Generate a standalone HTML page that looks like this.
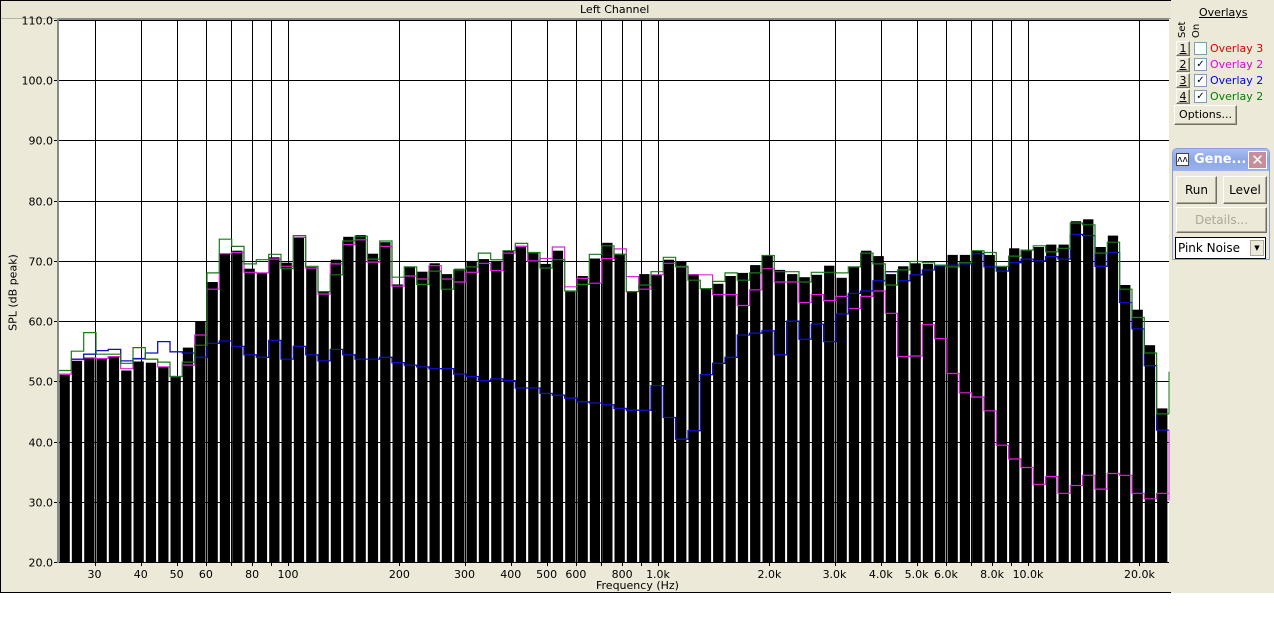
<!DOCTYPE html>
<html><head><meta charset="utf-8"><style>
body{margin:0;width:1274px;height:637px;background:#fff;overflow:hidden;font-family:Tahoma,"DejaVu Sans","Liberation Sans",sans-serif;}
#chart{position:absolute;left:0;top:0;width:1170px;height:591px;border:1px solid #000;border-right:none;background:#ece9d8;}
#side{position:absolute;left:1171px;top:0;width:103px;height:593px;background:#ece9d8;}
.t{position:absolute;font-size:11px;color:#000;white-space:nowrap;font-family:"DejaVu Sans","Liberation Sans",sans-serif;}
.btn{position:absolute;background:#ece9d8;border:1px solid;border-color:#fff #716f64 #716f64 #fff;box-shadow:inset -1px -1px 0 #aca899;font-size:11px;text-align:center;box-sizing:border-box;font-family:"DejaVu Sans","Liberation Sans",sans-serif;}
.cb{position:absolute;width:11px;height:11px;border:1px solid #7f9db9;background:#fff;font-size:10px;line-height:11px;text-align:center;font-weight:bold;}
</style></head><body>
<div id="chart">
<div style="position:absolute;left:0;top:0;width:1170px;height:17px;border-bottom:1px solid #b5b2a4;background:#e9e6d6"></div>
<div class="t" style="left:579px;top:2px">Left Channel</div>
<div class="t" style="left:595px;top:578px">Frequency (Hz)</div>
<div class="t" style="left:-43px;top:285px;transform:rotate(-90deg);width:110px;text-align:center">SPL (dB peak)</div>
<svg id="svg" width="1171" height="591" style="position:absolute;left:-1px;top:-1px" font-family="DejaVu Sans, Liberation Sans, sans-serif" font-size="11"></svg>
</div>
<div id="side">
<div class="t" style="left:28px;top:6px;text-decoration:underline">Overlays</div>
<div class="t" style="left:6px;top:38px;transform:rotate(-90deg);transform-origin:left top;font-size:10px">Set</div>
<div class="t" style="left:20px;top:38px;transform:rotate(-90deg);transform-origin:left top;font-size:10px">On</div>
<div class="btn" style="left:5px;top:41px;width:14px;height:15px;line-height:13px;text-decoration:underline">1</div>
<div class="btn" style="left:5px;top:57px;width:14px;height:15px;line-height:13px;text-decoration:underline">2</div>
<div class="btn" style="left:5px;top:73px;width:14px;height:15px;line-height:13px;text-decoration:underline">3</div>
<div class="btn" style="left:5px;top:89px;width:14px;height:15px;line-height:13px;text-decoration:underline">4</div>
<div class="cb" style="left:23px;top:42px"></div>
<div class="cb" style="left:23px;top:58px">✓</div>
<div class="cb" style="left:23px;top:74px">✓</div>
<div class="cb" style="left:23px;top:90px">✓</div>
<div class="t" style="left:39px;top:42px;color:#e00000">Overlay 3</div>
<div class="t" style="left:39px;top:58px;color:#e000e0">Overlay 2</div>
<div class="t" style="left:39px;top:74px;color:#0000e0">Overlay 2</div>
<div class="t" style="left:39px;top:90px;color:#008000">Overlay 2</div>
<div class="btn" style="left:3px;top:105px;width:63px;height:20px;line-height:18px">Options...</div>
<div style="position:absolute;left:1px;top:148px;width:98px;height:112px;background:#ece9d8;border:1px solid #8a9fd8;border-radius:5px 5px 0 0;box-sizing:border-box">
<div style="position:absolute;left:0;top:0;width:96px;height:22px;background:linear-gradient(#a8bdf2,#8aa6e6 50%,#9cb2ee);border-radius:4px 4px 0 0"></div>
<div style="position:absolute;left:3px;top:4px;width:13px;height:13px;background:#fff;border:1px solid #444;font-size:9px;line-height:12px;text-align:center;box-sizing:border-box">ʌʌ</div>
<div style="position:absolute;left:21px;top:3px;color:#fff;font-weight:bold;font-size:13px;font-family:'DejaVu Sans',sans-serif">Gene...</div>
<div style="position:absolute;left:75px;top:2px;width:19px;height:18px;background:#c88d99;border:1px solid #fff;box-sizing:border-box;color:#fff;font-size:15px;line-height:16px;text-align:center">✕</div>
<div class="btn" style="left:3px;top:27px;width:41px;height:28px;line-height:26px;font-size:12px">Run</div>
<div class="btn" style="left:50px;top:27px;width:44px;height:28px;line-height:26px;font-size:12px">Level</div>
<div class="btn" style="left:3px;top:58px;width:91px;height:26px;line-height:24px;font-size:12px;color:#aca899">Details...</div>
<div style="position:absolute;left:2px;top:88px;width:91px;height:22px;background:#fff;border:1px solid #000;box-sizing:border-box;font-size:12px;line-height:20px;padding-left:2px;font-family:'DejaVu Sans',sans-serif">Pink Noise<div style="position:absolute;right:1px;top:2px;width:14px;height:16px;background:#ece9d8;border:1px solid #aca899;box-sizing:border-box;font-size:7px;line-height:15px;text-align:center">▼</div></div>
</div>
</div>
<script>
var S=document.getElementById('svg'),h='';
function Y(d){return 562-(d-20)*6.022;}
function X(f){return 288+370*Math.log10(f/100);}
var fr=[30,40,50,60,70,80,90,100,200,300,400,500,600,700,800,900,1000,2000,3000,4000,5000,6000,7000,8000,9000,10000,20000];
h+='<rect x="59" y="20" width="1110" height="542" fill="#fff"/>';
fr.forEach(function(f){var x=Math.round(X(f))+0.5;h+='<line x1="'+x+'" y1="20" x2="'+x+'" y2="566" stroke="#000"/>';});
for(var d=20;d<=110;d+=10){var y=Math.round(Y(d))+0.5;h+='<line x1="54" y1="'+y+'" x2="1169" y2="'+y+'" stroke="#000"/>';h+='<text x="53" y="'+(y+4)+'" text-anchor="end">'+d.toFixed(1)+'</text>';}
var lab=[[30,'30'],[40,'40'],[50,'50'],[60,'60'],[80,'80'],[100,'100'],[200,'200'],[300,'300'],[400,'400'],[500,'500'],[600,'600'],[800,'800'],[1000,'1.0k'],[2000,'2.0k'],[3000,'3.0k'],[4000,'4.0k'],[5000,'5.0k'],[6000,'6.0k'],[8000,'8.0k'],[10000,'10.0k'],[20000,'20.0k']];
lab.forEach(function(l){h+='<text x="'+X(l[0]).toFixed(1)+'" y="578" text-anchor="middle">'+l[1]+'</text>';});
var B=[51.1,53.4,53.9,53.8,54.1,51.8,53.3,53.1,52.4,50.7,55.6,60,66.5,71.2,71.7,68.7,68,70.6,69.7,73.9,69,64.9,70.2,74,74.3,71.2,73.1,66.1,69,68.2,69.6,67.8,68.7,70,70.3,70,71.7,72.5,71.3,69.5,71.7,64.9,67.5,70.4,73,71.2,64.9,67.8,67.7,70.2,69.9,67.8,65.4,66.2,67.5,68,69.3,70.9,68.5,67.8,67.3,67.7,69.2,67.2,69,71.7,70.8,67.8,69.1,69.6,69.5,69.3,71,71,71.7,71,69,72.1,71.9,72.3,72.7,72.7,76.6,76.9,72.3,74.2,66,61.9,56,45.5];
var G=[51.8,55,58.1,54.5,54.5,53,55.6,53.7,53.2,50.8,53.2,56,68,73.6,72.4,69.5,70.2,71.1,68.7,74.2,69.1,64.9,67.7,73.3,74.1,70.3,73.3,67.3,69,66.1,68.3,65.3,68.5,69,71.3,70.2,71.7,72.9,71.4,68.8,70.2,65,66.1,71.1,72.5,71.1,64.9,66,68.2,70.6,69.1,66.8,65.4,66.6,68,66.8,68,70.9,68.2,68.2,66.5,68.1,68.1,68,69,71.3,69.5,66,68.5,69.9,69.7,69.3,69,69.7,71.7,71.4,69.1,70.8,71.8,72.5,71.5,72.1,76.3,76,71.3,73.1,65.3,60.6,54.7,44.6];
var M=[51.2,53.6,53.9,53.8,54.1,52.1,53.7,53.7,52.4,50.8,52.7,57.7,65.3,71.2,71.4,68.1,68,70.3,69.1,73.9,68.8,64.5,69.5,72.7,73.5,69.8,72.4,65.8,67.5,67,69.2,67,66.5,68.1,69.6,68.4,71.3,72.4,70,70.4,72.3,65.7,67.1,66.3,70.4,72,67.4,65.3,67.7,69.6,69,67.7,67.7,64.4,64.4,62.6,65.2,68.7,66.5,66.5,63.1,64.4,63.4,64.1,62.1,64.1,65,61.3,54.1,54.2,59.4,57.1,51.3,48.1,47.4,45.1,39.4,37.1,35.7,32.9,34.2,31.4,32.7,34.4,32.1,34.7,34.4,31.4,30.5,31.4,30.2];
var L=[null,53.7,54.5,55.1,55.3,53.4,53.8,54.7,56.6,54.9,54.7,54,56.3,56.7,55.8,54.4,54,56.8,53.7,55.8,54.4,53.4,55.3,54.4,53.7,53.7,54,53.1,52.7,52.4,52.1,52.1,51.2,50.8,50.1,50.4,50.1,48.9,48.9,48,47.7,47.2,46.6,46.4,46.1,45.5,45.2,45.2,49.3,44,40.4,41.8,51.1,53,54,57.7,58,58.4,54.4,60,57,59.5,56.6,61.2,64.6,65,66.7,68.2,66.7,67.7,68.5,69.2,69.3,69.5,71.2,69,68.3,69.7,70.3,70,70.7,70.3,74.4,74.2,69.1,71.4,63.1,58.7,52.6,41.9];
var P=12.333;
for(var i=0;i<90;i++){var x=59+P*i,y=Y(B[i]);h+='<rect x="'+(x+0.5).toFixed(1)+'" y="'+y.toFixed(1)+'" width="10.3" height="'+(562-y).toFixed(1)+'" fill="#000"/>';}
function step(a,c,s){var p='',st=false;for(var i=0;i<90;i++){if(a[i]==null)continue;var x0=59+P*i,x1=x0+P,y=Y(a[i]).toFixed(1);if(i==89)x1=1169;p+=(st?'L':'M')+x0.toFixed(1)+' '+y+'L'+x1.toFixed(1)+' '+y;st=true;}h+='<path d="'+p+'" fill="none" stroke="'+c+'" stroke-width="'+s+'"/>';}
step(M,'#e020e0',1.2);step(L,'#1010c0',1.3);step(G,'#1a7a1a',1.2);
h+='<line x1="1169" y1="'+Y(44.6)+'" x2="1169" y2="'+Y(51.6)+'" stroke="#1a7a1a"/>';
h+='<line x1="1169" y1="'+Y(30.2)+'" x2="1169" y2="'+Y(41.9)+'" stroke="#e020e0"/>';
h+='<line x1="58" y1="19" x2="1169" y2="19" stroke="#8a8a8a" stroke-width="2"/><line x1="58" y1="19" x2="58" y2="563" stroke="#8a8a8a" stroke-width="2"/>';
S.innerHTML=h;
</script>
</body></html>
